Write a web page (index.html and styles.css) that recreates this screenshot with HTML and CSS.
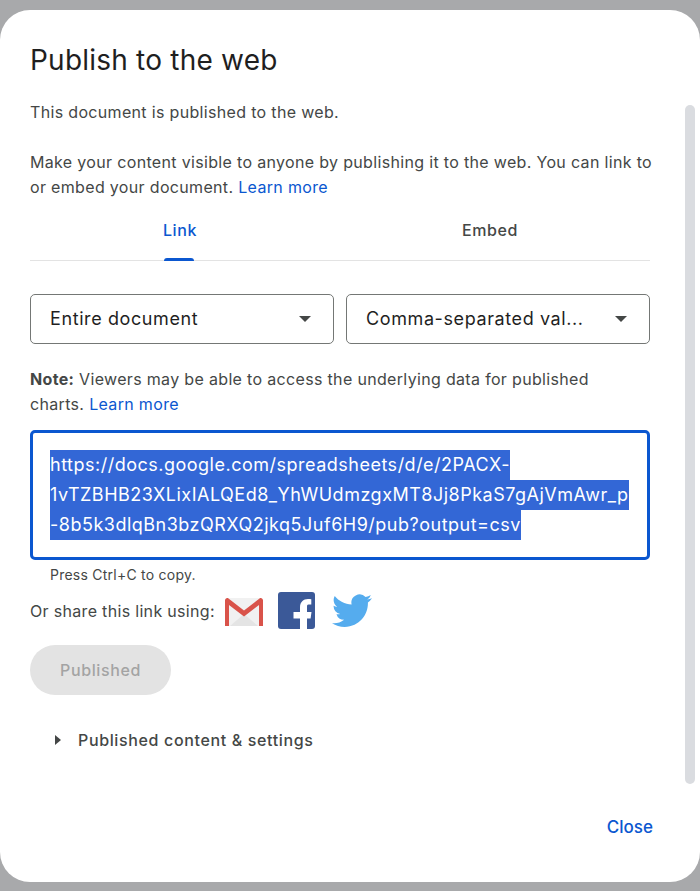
FILE: index.html
```html
<!DOCTYPE html>
<html lang="en">
<head>
<meta charset="utf-8">
<title>Publish to the web</title>
<link rel="stylesheet" href="styles.css">
</head>
<body>
<div class="dialog">
  <div class="scrollbar"></div>
  <main class="content">
    <h1 class="title">Publish to the web</h1>
    <p class="status">This document is published to the web.</p>
    <p class="intro">Make your content visible to anyone by publishing it to the web. You can link to<br>or embed your document. <a class="link" href="#">Learn more</a></p>
    <div class="tabs">
      <div class="tab tab-active">Link<span class="tab-indicator"></span></div>
      <div class="tab">Embed</div>
    </div>
    <div class="selects">
      <div class="select"><span>Entire document</span><i class="caret"></i></div>
      <div class="select"><span>Comma-separated val...</span><i class="caret"></i></div>
    </div>
    <p class="note"><b class="note-label">Note:</b> Viewers may be able to access the underlying data for published<br>charts. <a class="link" href="#">Learn more</a></p>
    <div class="url-box">
      <span class="url-line">https://docs.google.com/spreadsheets/d/e/2PACX-</span>
      <span class="url-line">1vTZBHB23XLixIALQEd8_YhWUdmzgxMT8Jj8PkaS7gAjVmAwr_p</span>
      <span class="url-line">-8b5k3dlqBn3bzQRXQ2jkq5Juf6H9/pub?output=csv</span>
    </div>
    <div class="hint">Press Ctrl+C to copy.</div>
    <div class="share">
      <span class="share-label">Or share this link using:</span>
      <svg class="icon-gmail" viewBox="0 0 40 30" aria-label="Gmail">
        <path fill="#f1f1f1" d="M3 2h34v28H3z"/>
        <path fill="#e4e4e4" d="M6 30 20 18l14 12z"/>
        <path fill="#d9534a" d="M1 4.500C1 2.500 3 1.500 4.500 2.500L20 14.500 35.500 2.500C37 1.500 39 2.500 39 4.500V30H35V9L20 20.500 5 9V30H1z"/>
      </svg>
      <svg class="icon-fb" viewBox="0 0 37 37" aria-label="Facebook">
        <rect width="37" height="37" rx="3" fill="#3b5998"/>
        <path fill="#fff" d="M22 37V26.500H15.500V20H22V15.500C22 10 25.300 7 30 7c1.200 0 2.200.1 3.300.2V12.500H30.500C29 12.500 29 13.800 29 15.300V20h4.500l-.9 6.500H29V37z"/>
      </svg>
      <svg class="icon-tw" viewBox="0 0 24 20" aria-label="Twitter">
        <path fill="#55acee" transform="translate(0 -2.200)" d="M23.953 4.570a10 10 0 01-2.825.775 4.958 4.958 0 002.163-2.723c-.951.555-2.005.959-3.127 1.184a4.920 4.920 0 00-8.384 4.482C7.690 8.095 4.067 6.130 1.640 3.162a4.822 4.822 0 00-.666 2.475c0 1.710.870 3.213 2.188 4.096a4.904 4.904 0 01-2.228-.616v.060a4.923 4.923 0 003.946 4.827 4.996 4.996 0 01-2.212.085 4.936 4.936 0 004.604 3.417 9.867 9.867 0 01-6.102 2.105c-.390 0-.779-.023-1.170-.067a13.995 13.995 0 007.557 2.209c9.053 0 13.998-7.496 13.998-13.985 0-.210 0-.420-.015-.630A9.935 9.935 0 0024 4.590z"/>
      </svg>
    </div>
    <div class="published">Published</div>
    <div class="disclosure"><i class="disclosure-arrow"></i><span>Published content &amp; settings</span></div>
  </main>
  <footer class="footer"><a class="close" href="#">Close</a></footer>
</div>
</body>
</html>
```
FILE: styles.css
```css
* { box-sizing: border-box; }
html, body { margin: 0; height: 891px; overflow: hidden; }
body {
  background: #a8a9ab;
  padding: 10px 0 9px;
  font-family: Inter, Roboto, "Liberation Sans", sans-serif;
  color: #444746;
}
.dialog {
  position: relative;
  display: flex;
  flex-direction: column;
  height: 872px;
  background: #fff;
  border-radius: 30px;
}
.scrollbar {
  position: absolute;
  top: 95px;
  right: 5px;
  width: 10px;
  height: 679px;
  background: #dadce0;
  border-radius: 5px;
}
.content { width: 620px; margin-left: 30px; }
.title {
  margin: 0;
  padding-top: 32px;
  font-size: 28px;
  line-height: 36px;
  font-weight: 400;
  letter-spacing: .22px;
  color: #1f1f1f;
}
.status, .intro, .note { margin: 0; font-size: 16px; line-height: 25px; letter-spacing: .33px; white-space: nowrap; }
.status { margin-top: 22px; }
.intro { margin-top: 25px; }
.link { color: #0b57d0; text-decoration: none; }
.tabs { display: flex; gap: 10px; height: 61px; border-bottom: 1px solid #e3e3e3; }
.tab {
  position: relative;
  width: 300px;
  padding-top: 18px;
  text-align: center;
  font-size: 16px;
  line-height: 24px;
  font-weight: 500;
  letter-spacing: .6px;
}
.tab-active { color: #0b57d0; }
.tab-indicator {
  position: absolute;
  left: 134px;
  bottom: -1px;
  width: 30px;
  height: 3px;
  background: #0b57d0;
  border-radius: 3px 3px 0 0;
}
.selects { display: flex; gap: 12px; margin-top: 33px; }
.select {
  display: flex;
  align-items: center;
  justify-content: space-between;
  flex: 1;
  height: 50px;
  padding: 0 22px 0 19px;
  border: 1px solid #747775;
  border-radius: 5px;
  font-size: 18px;
  letter-spacing: .6px;
  color: #1f1f1f;
}
.select span { margin-top: -2px; }
.caret {
  width: 0;
  height: 0;
  border-left: 6.500px solid transparent;
  border-right: 6.500px solid transparent;
  border-top: 6.500px solid #444746;
}
.note { margin-top: 23px; }
.note-label { font-weight: 700; }
.url-box {
  margin-top: 13px;
  height: 130px;
  padding: 17px;
  border: 3px solid #0b57d0;
  border-radius: 5px;
}
.url-line {
  display: block;
  width: fit-content;
  background: #3367d6;
  color: #fff;
  font-size: 18px;
  line-height: 30px;
  letter-spacing: .5px;
  white-space: nowrap;
}
.hint { margin: 6px 0 0 20px; font-size: 14px; line-height: 18px; letter-spacing: .24px; }
.share { display: flex; align-items: center; height: 37px; margin-top: 8px; }
.share-label { font-size: 16px; letter-spacing: .32px; }
.icon-gmail { width: 40px; height: 30px; margin-left: 9px; }
.icon-fb { width: 37px; height: 37px; margin-left: 14px; }
.icon-tw { width: 40px; height: 34px; margin-left: 17px; }
.published {
  display: flex;
  align-items: center;
  justify-content: center;
  width: 141px;
  height: 50px;
  margin-top: 16px;
  border-radius: 25px;
  background: #e3e3e3;
  color: #a3a3a3;
  font-size: 16px;
  font-weight: 500;
  letter-spacing: .6px;
}
.disclosure {
  display: flex;
  align-items: center;
  height: 24px;
  margin-top: 33px;
  font-size: 16px;
  font-weight: 500;
  letter-spacing: .64px;
}
.disclosure-arrow {
  width: 0;
  height: 0;
  margin: 0 17px 0 25px;
  border-top: 5px solid transparent;
  border-bottom: 5px solid transparent;
  border-left: 6px solid #444746;
}
.footer { display: flex; justify-content: flex-end; margin-top: auto; padding: 0 47px 43px 0; }
.close { color: #0b57d0; text-decoration: none; font-size: 17px; line-height: 24px; font-weight: 500; }
```
